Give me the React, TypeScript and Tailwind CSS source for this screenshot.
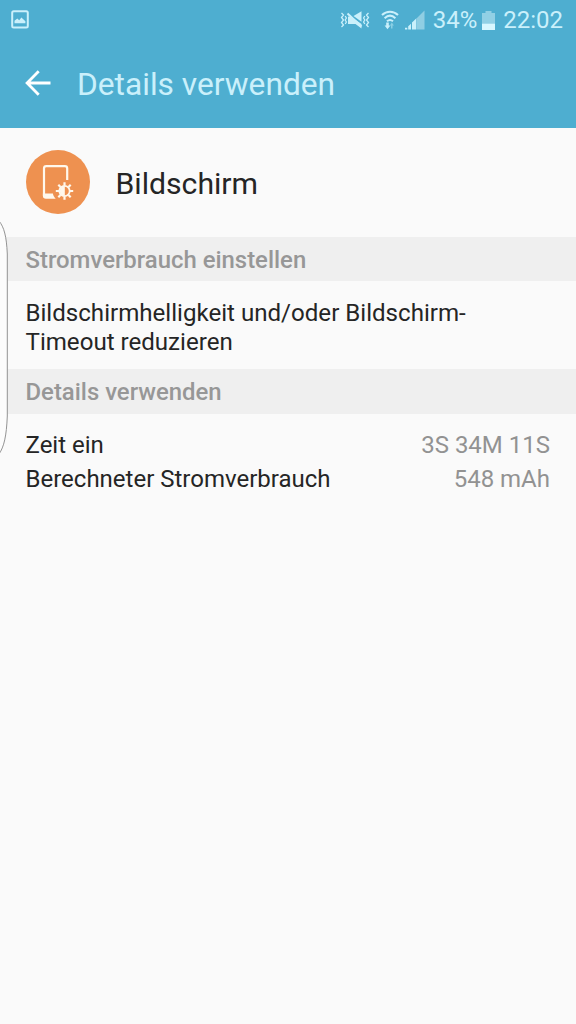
import type { ReactNode } from 'react';

interface Usage {
  label: string;
  value: string;
}

const usage: Usage[] = [
  { label: 'Zeit ein', value: '3S 34M 11S' },
  { label: 'Berechneter Stromverbrauch', value: '548 mAh' },
];

const ImageIcon = () => (
  <svg width="18" height="19" viewBox="0 0 18 19" fill="none">
    <rect x="1.2" y="1.2" width="15.6" height="16.2" rx="1.5" stroke="#caf0fb" strokeWidth="2" />
    <path d="M3.500 13.200v-2.400L6.300 8.400l1.900 1.800 2.200-2.600 4 3.700v1.900z" fill="#caf0fb" />
  </svg>
);

const VibrateIcon = () => (
  <svg width="30" height="20" viewBox="0 0 30 20" fill="none">
    <path
      d="M1.500 3l2 2-2 2.500 2 2.500-2 2.500 2 2.500-2 2M5.200 6l1.200 2-1.200 2 1.200 2-1.200 2M28.500 3l-2 2 2 2.500-2 2.500 2 2.500-2 2.500 2 2M24.800 6l-1.200 2 1.200 2-1.200 2 1.200 2"
      stroke="#caf0fb"
      strokeWidth="1.300"
    />
    <path d="M8 6.500l3.500.5L21.500 14v4.600L15.500 14H8z" fill="#caf0fb" />
    <path d="M13.500 6L21.500 1.200v10.500z" fill="#caf0fb" />
    <path d="M7.500 3.500L21.500 16.500" stroke="#caf0fb" strokeWidth="2" />
  </svg>
);

const WifiIcon = () => (
  <svg width="18" height="20" viewBox="0 0 18 20" fill="none">
    <path
      d="M1 5C5.500 .5 12.500 .5 17 5M3.600 8.300C7 5 11 5 14.400 8.300M6 11.300c2-1.700 4-1.700 6 0"
      stroke="#caf0fb"
      strokeWidth="2"
    />
    <path d="M5.200 12.500h2.600v3h1.600l-2.900 3.700-2.900-3.700h1.600z" fill="#caf0fb" />
    <path d="M11.500 18.500h-1.500v-3H8.900l1.900-3 2.100 3h-1.400z" fill="#8bcfe4" />
  </svg>
);

const SignalIcon = () => (
  <svg width="20" height="20" viewBox="0 0 20 20">
    <path d="M11.500 8.500L19.500 .5v19h-8z" fill="#8fcee3" />
    <path d="M7 19.500v-7l4.200-4v11zM3.200 16.300l2.800-2.500v5.700H3.200zM0 17.800h2.300v1.700H0z" fill="#caf0fb" />
  </svg>
);

const BatteryIcon = () => (
  <svg width="13" height="19" viewBox="0 0 13 19">
    <path d="M3.500 0h6v2H13v10.500H0V2h3.500z" fill="#91d0e5" />
    <path d="M0 12.500h13V19H0z" fill="#d8f7ff" />
  </svg>
);

const BackIcon = () => (
  <svg className="-mt-[2px]" width="26" height="26" viewBox="0 0 26 26" fill="none" stroke="#fff" strokeWidth="2.800">
    <path d="M13.700 1.300L2.100 13l11.600 11.700M2.500 13H25.500" />
  </svg>
);

const DisplayIcon = () => (
  <svg className="-mt-[2px]" width="64" height="64" viewBox="0 0 64 64" fill="none">
    <circle cx="32" cy="32" r="32" fill="#ee9150" />
    <path
      d="M41.200 30V18.500c0-1.600-.7-2.300-2.300-2.300H20.300c-1.600 0-2.300.7-2.300 2.300V46"
      stroke="#fff8ec"
      strokeWidth="2.200"
    />
    <path d="M16.900 43.500h10c.3 2 1.300 3.800 2.800 5.200H20c-2.100 0-3.100-1-3.100-2.800z" fill="#fff8ec" />
    <circle cx="38.500" cy="41" r="5.200" stroke="#fff8ec" strokeWidth="1.800" />
    <path d="M38.800 36a5 5 0 0 0 0 10z" fill="#fff8ec" />
    <path
      d="M38.500 35.500v-3.200M38.500 46.500v3.200M33 41h-3.200M44 41h3.200M34.500 37l-2.200-2.200M42.500 45l2.200 2.200M34.500 45l-2.200 2.200M42.500 37l2.200-2.200"
      stroke="#fff8ec"
      strokeWidth="2.200"
    />
  </svg>
);

// Pull-out handle of the edge panel, floats above the list
const EdgeHandle = () => (
  <svg className="absolute left-0 top-[216px]" width="9" height="244" viewBox="0 0 9 244" fill="none">
    <path d="M-1 5C4 11 6.500 20 7.300 38V200C6.500 220 4 231 -1 238z" fill="#fcfcfc" stroke="#939393" />
  </svg>
);

const SectionHeader = ({ children }: { children: ReactNode }) => (
  <h2 className="bg-[#efefef] px-[25.500px] text-[23.900px] font-medium text-[#979797]">{children}</h2>
);

const App = () => {
  return (
    <div className="relative flex h-screen w-full flex-col overflow-hidden bg-[#fafafa] font-['Roboto',sans-serif] text-[#252525]">
      <header className="h-32 shrink-0 bg-[#4eaed0]">
        <div className="flex h-10 items-center justify-between pl-[11px] pr-[13px] text-[#caf0fb]">
          <span className="-mt-px"><ImageIcon /></span>
          <div className="flex items-center text-[24px] leading-10">
            <span className="-mt-px"><VibrateIcon /></span>
            <span className="ml-[11px]"><WifiIcon /></span>
            <span className="ml-[6px]"><SignalIcon /></span>
            <span className="ml-[8px]">34%</span>
            <span className="ml-[5px]"><BatteryIcon /></span>
            <span className="ml-[8px]">22:02</span>
          </div>
        </div>
        <div className="flex h-[88px] items-center gap-[26px] pl-[25px]">
          <BackIcon />
          <h1 className="pt-[2px] text-[31.700px] text-[#caf0fb]">Details verwenden</h1>
        </div>
      </header>
      <main>
        <div className="flex h-[109px] items-center gap-[26px] pl-[25.500px]">
          <DisplayIcon />
          <span className="pt-[3px] text-[30.200px]">Bildschirm</span>
        </div>
        <SectionHeader><span className="block pt-[2px] leading-[42px]">Stromverbrauch einstellen</span></SectionHeader>
        <p className="h-[88px] px-[25.500px] pt-[18px] text-[24.100px] leading-[29px]">
          Bildschirmhelligkeit und/oder Bildschirm-
          <br />
          Timeout reduzieren
        </p>
        <SectionHeader><span className="block pt-[2px] leading-[43px]">Details verwenden</span></SectionHeader>
        <dl className="pl-[25.500px] pr-[26px] pt-[14px] text-[24px] leading-[34px]">
          {usage.map((item) => (
            <div key={item.label} className="flex justify-between">
              <dt>{item.label}</dt>
              <dd className="text-[#929292]">{item.value}</dd>
            </div>
          ))}
        </dl>
      </main>
      <EdgeHandle />
    </div>
  );
};

export default App;
